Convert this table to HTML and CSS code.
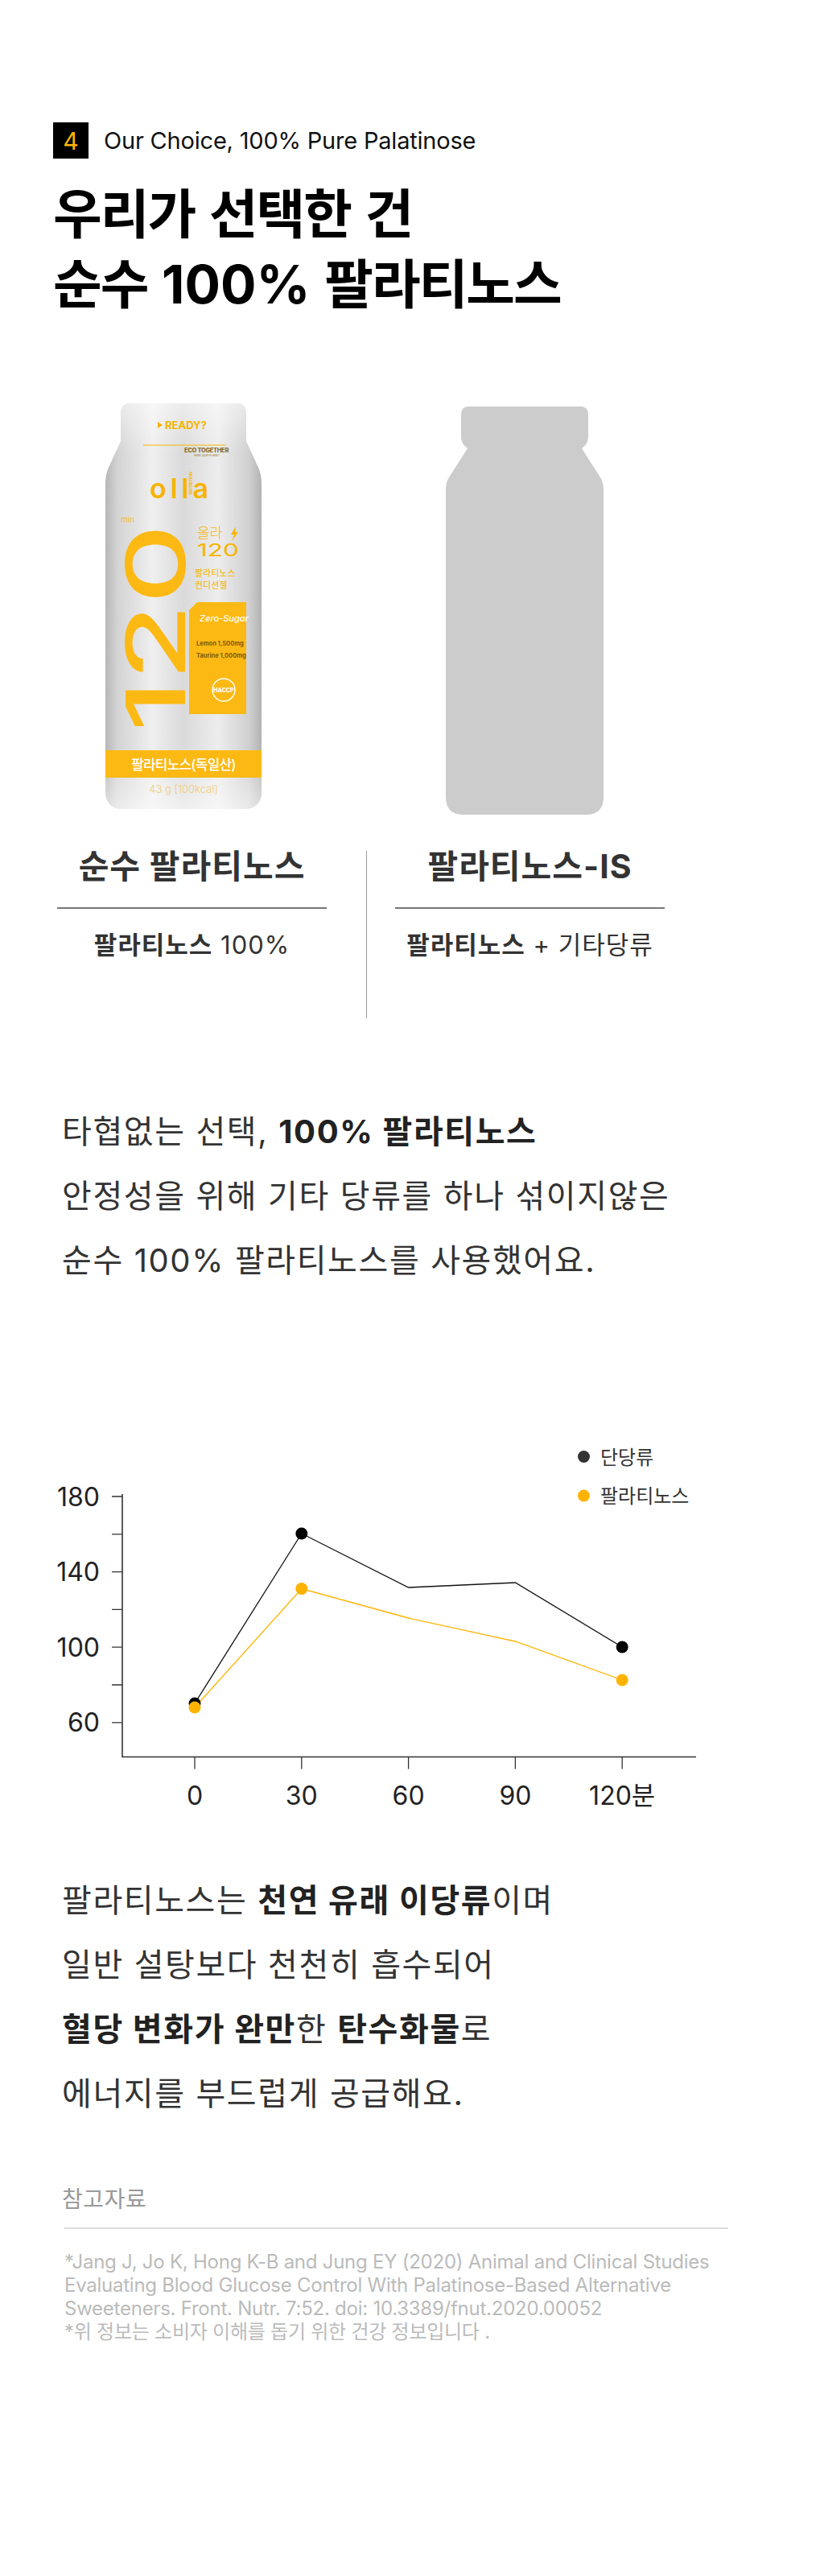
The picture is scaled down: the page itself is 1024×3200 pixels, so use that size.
FILE: index.html
```html
<!DOCTYPE html>
<html lang="ko">
<head>
<meta charset="utf-8">
<title>Our Choice, 100% Pure Palatinose</title>
<link rel="stylesheet" href="styles.css">
</head>
<body>
<main class="page">
  <header class="eyebrow">
    <span class="badge">4</span>
    <span class="eyebrow-text">Our Choice, 100% Pure Palatinose</span>
  </header>
  <h1 class="title">우리가 선택한 건<br>순수 <span class="num">100%</span> 팔라티노스</h1>

  <section class="compare">
    <div class="products">
      <svg class="pouch" width="194" height="505" viewBox="0 0 194 505" aria-label="올라 120 팔라티노스 컨디션젤">
        <defs>
          <linearGradient id="foil" x1="0" x2="1" y1="0" y2="0">
            <stop offset="0" stop-color="#b7b7b7"/>
            <stop offset="0.08" stop-color="#d4d4d4"/>
            <stop offset="0.3" stop-color="#efefef"/>
            <stop offset="0.5" stop-color="#dadada"/>
            <stop offset="0.72" stop-color="#ededed"/>
            <stop offset="0.92" stop-color="#d0d0d0"/>
            <stop offset="1" stop-color="#b3b3b3"/>
          </linearGradient>
          <linearGradient id="foilV" x1="0" x2="0" y1="0" y2="1">
            <stop offset="0" stop-color="#ffffff" stop-opacity="0.5"/>
            <stop offset="0.12" stop-color="#ffffff" stop-opacity="0"/>
            <stop offset="0.85" stop-color="#ffffff" stop-opacity="0"/>
            <stop offset="1" stop-color="#ffffff" stop-opacity="0.55"/>
          </linearGradient>
        </defs>
        <path d="M31 0 H163 Q175 0 175 12 V47 L191 82 Q194 90 194 100 V482 Q194 501 176 504 H18 Q0 501 0 482 V100 Q0 90 3 82 L19 47 V12 Q19 0 31 0 Z" fill="url(#foil)"/>
        <path d="M31 0 H163 Q175 0 175 12 V47 L191 82 Q194 90 194 100 V482 Q194 501 176 504 H18 Q0 501 0 482 V100 Q0 90 3 82 L19 47 V12 Q19 0 31 0 Z" fill="url(#foilV)"/>
        <path d="M65 23 L71 27 L65 31 Z" fill="#f6b400"/>
        <text x="74" y="32" class="pk pk-ready">READY?</text>
        <line x1="47" y1="52" x2="150" y2="52" stroke="#f6b400" stroke-width="1.2"/>
        <text x="98" y="61" class="pk pk-eco">ECO TOGETHER</text>
        <text x="110" y="66" class="pk pk-eco2">SAVE OUR PLANET</text>
        <text x="55" y="118" class="pk pk-logo">olla</text>
        <text transform="translate(108 113) rotate(-90)" class="pk pk-nutri">NUTRITION</text>
        <text x="19" y="148" class="pk pk-min">min</text>
        <text transform="translate(99 408) rotate(-90)" class="pk pk-big" textLength="258" lengthAdjust="spacingAndGlyphs">120</text>
        <text x="114" y="167" class="pk pk-olla">올라</text>
        <path d="M162 153 L156 163 H160 L157 171 L165 160 H161 Z" fill="#f6b400"/>
        <text x="114" y="190" class="pk pk-120" textLength="52" lengthAdjust="spacingAndGlyphs">120</text>
        <text x="111" y="215" class="pk pk-small">팔라티노스</text>
        <text x="111" y="230" class="pk pk-small">컨디션젤</text>
        <path d="M114 247 H175 V386 H104 V257 Z" fill="#fdb913"/>
        <text x="117" y="271" class="pk pk-zero">Zero-Sugar</text>
        <text x="113" y="301" class="pk pk-ing">Lemon 1,500mg</text>
        <text x="113" y="316" class="pk pk-ing">Taurine 1,000mg</text>
        <circle cx="147" cy="356" r="14" fill="none" stroke="#ffffff" stroke-width="1.4"/>
        <text x="147" y="359" class="pk pk-haccp">HACCP</text>
        <rect x="0" y="431" width="194" height="34" fill="#fdb913"/>
        <text x="97" y="455" class="pk pk-band">팔라티노스(독일산)</text>
        <text x="97" y="484" class="pk pk-kcal">43 g [100kcal]</text>
      </svg>
      <svg class="bottle" width="196" height="507" viewBox="0 0 196 507" aria-label="팔라티노스-IS">
        <path d="M29 0 H167 Q177 0 177 10 V38 Q177 46 169 52 L192 88 Q196 94 196 104 V485 Q196 507 174 507 H22 Q0 507 0 485 V104 Q0 94 4 88 L27 52 Q19 46 19 38 V10 Q19 0 29 0 Z" fill="#cccccc"/>
      </svg>
    </div>

    <div class="compare-row">
      <div class="compare-col">
        <h2>순수 팔라티노스</h2>
        <div class="rule"></div>
        <p><b>팔라티노스</b> 100%</p>
      </div>
      <div class="divider"></div>
      <div class="compare-col">
        <h2>팔라티노스-IS</h2>
        <div class="rule"></div>
        <p><b>팔라티노스</b> + 기타당류</p>
      </div>
    </div>
  </section>

  <p class="lead">타협없는 선택, <b>100% 팔라티노스</b><br>안정성을 위해 기타 당류를 하나 섞이지않은<br>순수 100% 팔라티노스를 사용했어요.</p>

  <figure class="chart">
    <svg class="chart-svg" width="900" height="480" viewBox="66 1780 900 480" aria-label="혈당 변화 그래프">
      <circle cx="725.5" cy="1809.5" r="7.5" fill="#333333"/>
      <text x="746" y="1818.5" class="ch-legend">단당류</text>
      <circle cx="725.5" cy="1858" r="7.5" fill="#ffb300"/>
      <text x="746" y="1867" class="ch-legend">팔라티노스</text>

      <path d="M152 1856 V2182.5 H865" fill="none" stroke="#333333" stroke-width="1.6"/>
      <path d="M139 1859 H152 M139 1905.8 H152 M139 1952.6 H152 M139 1999.4 H152 M139 2046.2 H152 M139 2093 H152 M139 2139.8 H152" stroke="#333333" stroke-width="1.3"/>
      <path d="M242 2182.5 V2197.5 M374.8 2182.5 V2197.5 M507.6 2182.5 V2197.5 M640.4 2182.5 V2197.5 M773.2 2182.5 V2197.5" stroke="#333333" stroke-width="1.3"/>

      <text x="124" y="1870.6" class="ch-axis" text-anchor="end">180</text>
      <text x="124" y="1964.2" class="ch-axis" text-anchor="end">140</text>
      <text x="124" y="2057.8" class="ch-axis" text-anchor="end">100</text>
      <text x="124" y="2151.4" class="ch-axis" text-anchor="end">60</text>

      <text x="242" y="2241.6" class="ch-axis" text-anchor="middle">0</text>
      <text x="374.8" y="2241.6" class="ch-axis" text-anchor="middle">30</text>
      <text x="507.6" y="2241.6" class="ch-axis" text-anchor="middle">60</text>
      <text x="640.4" y="2241.6" class="ch-axis" text-anchor="middle">90</text>
      <text x="773.2" y="2241.6" class="ch-axis" text-anchor="middle">120분</text>

      <polyline points="242,2116 374.8,1905 507.6,1972 640.4,1966 773.2,2046" fill="none" stroke="#111111" stroke-width="1.3"/>
      <polyline points="242,2121 374.8,1973.6 507.6,2010 640.4,2039 773.2,2087" fill="none" stroke="#ffb300" stroke-width="1.3"/>
      <circle cx="242" cy="2116" r="7.5" fill="#000000"/>
      <circle cx="374.8" cy="1905" r="7.5" fill="#000000"/>
      <circle cx="773.2" cy="2046" r="7.5" fill="#000000"/>
      <circle cx="242" cy="2121" r="7.5" fill="#ffb300"/>
      <circle cx="374.8" cy="1973.6" r="7.5" fill="#ffb300"/>
      <circle cx="773.2" cy="2087" r="7.5" fill="#ffb300"/>
    </svg>
  </figure>

  <p class="lead lead-2">팔라티노스는 <b>천연 유래 이당류</b>이며<br>일반 설탕보다 천천히 흡수되어<br><b>혈당 변화가 완만</b>한 <b>탄수화물</b>로<br>에너지를 부드럽게 공급해요.</p>

  <section class="refs">
    <h3 class="refs-title">참고자료</h3>
    <div class="refs-rule"></div>
    <p class="refs-text">*Jang J, Jo K, Hong K-B and Jung EY (2020) Animal and Clinical Studies<br>Evaluating Blood Glucose Control With Palatinose-Based Alternative<br>Sweeteners. Front. Nutr. 7:52. doi: 10.3389/fnut.2020.00052<br>*위 정보는 소비자 이해를 돕기 위한 건강 정보입니다 .</p>
  </section>
</main>
</body>
</html>
```

FILE: styles.css
```css
* { box-sizing: border-box; }
html, body { margin: 0; padding: 0; background: #ffffff; }
body {
  font-family: Inter, "Noto Sans CJK KR", sans-serif;
  color: #111111;
}
.page {
  width: 1024px;
  min-height: 3200px;
  padding: 152px 0 0 66px;
}

/* eyebrow */
.eyebrow { display: flex; align-items: center; gap: 19px; height: 45px; }
.badge {
  width: 44px; height: 45px;
  background: #000000; color: #ffb400;
  font-size: 30px; line-height: 1;
  display: flex; align-items: center; justify-content: center;
}
.eyebrow-text { font-size: 29px; line-height: 1; color: #111111; letter-spacing: -0.2px; }

/* title */
.title {
  margin: 26px 0 0;
  font-size: 66px; line-height: 87px; font-weight: 700;
  color: #000000; letter-spacing: -2px; word-spacing: 4px;
}
.title .num { letter-spacing: 0; }

/* products + comparison */
.products { display: flex; align-items: flex-start; margin-top: 104px; }
.pouch { display: block; margin-left: 65px; }
.bottle { display: block; margin-left: 229px; margin-top: 4px; }

.compare-row { display: flex; margin: 40px 0 0 5px; }
.compare-col { width: 335px; text-align: center; }
.compare-col h2 {
  margin: 0; font-size: 41px; line-height: 48px; font-weight: 700;
  color: #333333; letter-spacing: 1px;
}
.rule { height: 2px; background: #777777; margin-top: 27px; }
.compare-col p {
  margin: 25px 0 0; font-size: 31px; line-height: 40px;
  color: #333333; letter-spacing: 1px;
}
.compare-col p b { font-weight: 700; }
.divider { width: 1px; height: 208px; margin: 5px 35px 0 49px; background: #9a9a9a; }

/* body copy */
.lead {
  margin: 101px 0 0 11px;
  font-size: 40px; line-height: 80px; color: #333333;
  letter-spacing: 1.6px;
}
.lead b { font-weight: 700; color: #222222; }
.lead-2 { margin-top: 61px; }

/* chart */
.chart { margin: 174px 0 0; }
.chart-svg { display: block; }
.ch-legend { font-family: Inter, "Noto Sans CJK KR", sans-serif; font-size: 24px; fill: #333333; }
.ch-axis { font-family: Inter, "Noto Sans CJK KR", sans-serif; font-size: 32px; fill: #222222; }

/* references */
.refs { margin: 73px 0 0 11px; }
.refs-title {
  margin: 0; font-size: 28px; line-height: 36px; font-weight: 400;
  color: #999999; letter-spacing: 0.6px;
}
.refs-rule { width: 825px; height: 2px; margin: 17px 0 0 3px; background: #dddddd; }
.refs-text {
  margin: 26px 0 0 3px;
  font-size: 24px; line-height: 29px; color: #bbbbbb; letter-spacing: -0.25px;
}

/* package artwork texts */
.pk { font-family: Inter, "Noto Sans CJK KR", sans-serif; fill: #f6b400; }
.pk-ready { font-size: 13px; font-weight: 700; }
.pk-eco { font-size: 7.5px; font-weight: 800; fill: #8a6d2a; letter-spacing: -0.3px; }
.pk-eco2 { font-size: 3.5px; fill: #8a6d2a; }
.pk-logo { font-size: 34px; font-weight: 600; letter-spacing: 5px; }
.pk-nutri { font-size: 5px; font-weight: 700; }
.pk-min { font-size: 10px; font-weight: 300; }
.pk-big { font-size: 102px; font-weight: 500; fill: #fdb913; }
.pk-olla { font-size: 17px; font-weight: 300; }
.pk-120 { font-size: 22px; font-weight: 400; }
.pk-small { font-size: 11px; font-weight: 400; }
.pk-zero { font-size: 11px; font-weight: 500; fill: #ffffff; font-style: italic; }
.pk-ing { font-size: 7.5px; font-weight: 700; fill: #7a5b10; }
.pk-haccp { font-size: 7px; font-weight: 800; fill: #ffffff; text-anchor: middle; }
.pk-band { font-size: 17px; font-weight: 500; fill: #ffffff; text-anchor: middle; letter-spacing: -0.8px; }
.pk-kcal { font-size: 13px; font-weight: 300; fill: #f0cd74; text-anchor: middle; }
```
